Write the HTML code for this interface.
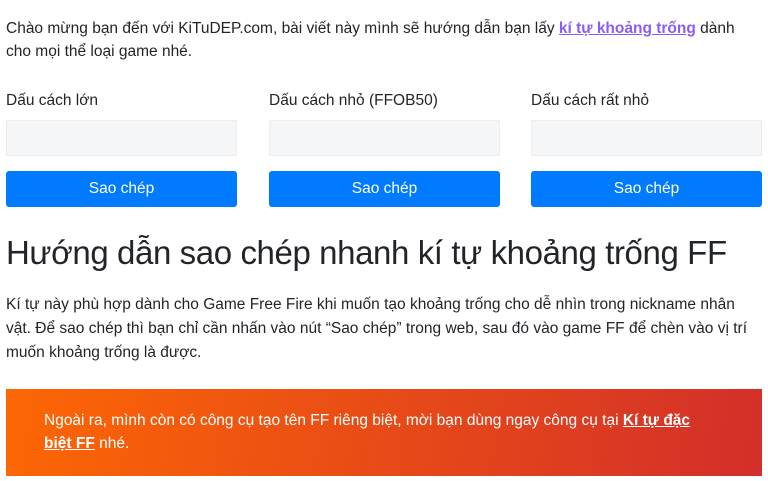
<!DOCTYPE html>
<html><head><meta charset="utf-8"><style>
*{margin:0;padding:0;box-sizing:border-box}
body{width:768px;height:481px;overflow:hidden;background:#fff;font-family:"Liberation Sans",sans-serif;color:#212529;font-size:15.5px;letter-spacing:0}
.p1{position:absolute;left:6px;top:17px;width:750px;line-height:23px}
a{color:#8a5cf5;font-weight:bold;text-decoration:underline}
.lbl{position:absolute;top:92px}
.inp{position:absolute;top:120px;width:231px;height:36px;background:#f5f6f7;border:1px solid #eceef0}
.btn{position:absolute;top:171px;width:231px;height:36px;background:#007bff;border-radius:3px;color:#fff;text-align:center;line-height:36px}
h1{position:absolute;left:6px;top:234px;font-size:33px;font-weight:normal;letter-spacing:-0.4px;white-space:nowrap}
.p2{position:absolute;left:6px;top:293px;width:745px;line-height:24px}
.box{position:absolute;left:6px;top:389px;width:756px;height:87px;background:linear-gradient(100deg,#fd6704,#d22f2a);color:#fff;padding:20px 50px 0 38px;line-height:23px}
.box b{text-decoration:underline}
</style></head><body>
<div class="p1">Chào mừng bạn đến với KiTuDEP.com, bài viết này mình sẽ hướng dẫn bạn lấy <a>kí tự khoảng trống</a> dành cho mọi thể loại game nhé.</div>
<div class="lbl" style="left:6px">Dấu cách lớn</div>
<div class="lbl" style="left:269px">Dấu cách nhỏ (FFOB50)</div>
<div class="lbl" style="left:531px">Dấu cách rất nhỏ</div>
<div class="inp" style="left:6px"></div>
<div class="inp" style="left:269px"></div>
<div class="inp" style="left:531px"></div>
<div class="btn" style="left:6px">Sao chép</div>
<div class="btn" style="left:269px">Sao chép</div>
<div class="btn" style="left:531px">Sao chép</div>
<h1>Hướng dẫn sao chép nhanh kí tự khoảng trống FF</h1>
<div class="p2">Kí tự này phù hợp dành cho Game Free Fire khi muốn tạo khoảng trống cho dễ nhìn trong nickname nhân vật. Để sao chép thì bạn chỉ cần nhấn vào nút “Sao chép” trong web, sau đó vào game FF để chèn vào vị trí muốn khoảng trống là được.</div>
<div class="box">Ngoài ra, mình còn có công cụ tạo tên FF riêng biệt, mời bạn dùng ngay công cụ tại <b>Kí tự đặc biệt FF</b> nhé.</div>
</body></html>
